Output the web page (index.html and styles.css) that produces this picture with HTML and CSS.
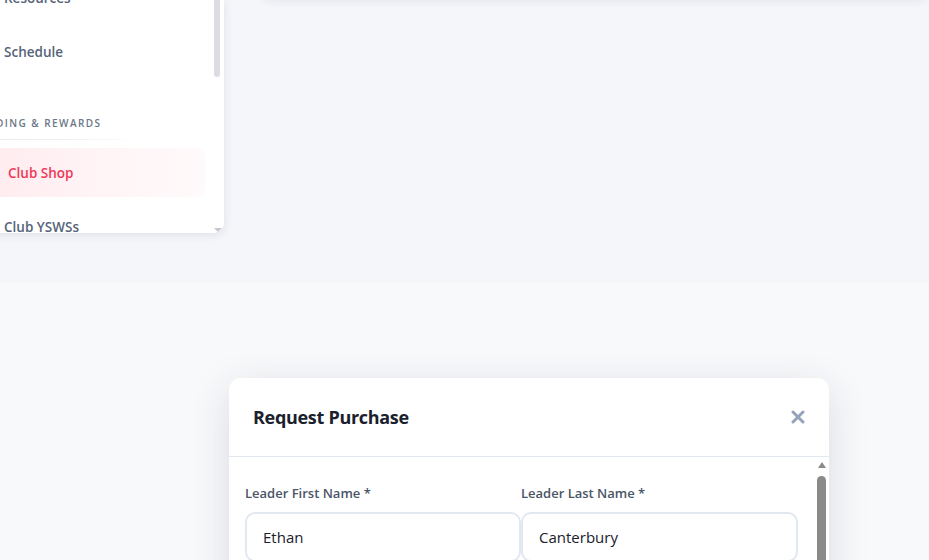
FILE: index.html
```html
<!DOCTYPE html>
<html>
<head>
<meta charset="utf-8">
<link rel="stylesheet" href="styles.css">
</head>
<body>
<div class="top">
  <aside class="sidebar">
    <nav class="nav">
      <div class="item">Resources</div>
      <div class="item">Schedule</div>
      <div class="section">
        <div class="section-title">FUNDING &amp; REWARDS</div>
      </div>
      <div class="item active">Club Shop</div>
      <div class="item">Club YSWSs</div>
    </nav>
    <div class="sb-track">
      <div class="sb-thumb"></div>
      <div class="sb-fill"></div>
      <div class="sb-arrow"></div>
    </div>
  </aside>
  <main class="main">
    <div class="card"></div>
  </main>
</div>
<div class="bottom">
  <div class="modal">
    <div class="modal-header">
      <h2 class="modal-title">Request Purchase</h2>
      <button class="close" aria-label="Close">
        <svg width="14" height="14" viewBox="0 0 14 14"><path d="M2 2 L12 12 M12 2 L2 12" stroke="#94a3b8" stroke-width="3" stroke-linecap="round"/></svg>
      </button>
    </div>
    <div class="modal-body">
      <div class="form">
        <div class="field">
          <label class="label">Leader First Name *</label>
          <div class="input">Ethan</div>
        </div>
        <div class="field">
          <label class="label">Leader Last Name *</label>
          <div class="input">Canterbury</div>
        </div>
      </div>
      <div class="scrollbar">
        <div class="arrow-up"></div>
        <div class="thumb"></div>
      </div>
    </div>
  </div>
</div>
</body>
</html>
```

FILE: styles.css
```css
* { box-sizing: border-box; }
html, body { margin: 0; padding: 0; }
body {
  font-family: "Open Sans", "Noto Sans", sans-serif;
  background: #f8f9fb;
  width: 929px;
  height: 560px;
  overflow: hidden;
}
.top {
  height: 282px;
  background: #f5f6fa;
  display: flex;
  overflow: hidden;
}
.sidebar {
  width: 284px;
  margin-left: -60px;
  height: 233px;
  background: #fff;
  border-bottom-right-radius: 10px;
  box-shadow: 0 2px 10px rgba(30, 41, 59, 0.10);
  display: flex;
  overflow: hidden;
  flex-shrink: 0;
}
.nav {
  flex: 1;
  margin-top: -27px;
  display: flex;
  flex-direction: column;
  gap: 5px;
  padding-left: 20px;
  padding-right: 10px;
}
.item {
  height: 49px;
  flex-shrink: 0;
  display: flex;
  align-items: center;
  padding-left: 44px;
  font-size: 13.5px;
  font-weight: 600;
  color: #56647a;
  border-radius: 10px;
}
.item.active {
  color: #f0385a;
  padding-left: 48px;
  background: linear-gradient(90deg, #ffe9ed 0%, #fff3f5 50%, #fffafb 100%);
}
.section {
  margin-top: 34px;
  margin-bottom: 3px;
  margin-left: -20px;
}
.section-title {
  font-size: 10px;
  font-weight: 600;
  letter-spacing: 1.45px;
  color: #6b7686;
  line-height: 16px;
  padding-left: 31px;
  padding-bottom: 8px;
  border-bottom: 1px solid transparent;
  border-image: linear-gradient(90deg, #e6e8ee 0%, #eceef2 60%, rgba(255,255,255,0) 100%) 1;
  width: 200px;
}
.sb-track {
  width: 8px;
  padding: 0 3px 0 0;
  display: flex;
  flex-direction: column;
}
.sb-thumb {
  width: 6px;
  height: 77px;
  background: #dcdde3;
  border-radius: 0 0 3px 3px;
  margin-left: -2px;
}
.sb-fill { flex: 1; }
.sb-arrow {
  width: 0; height: 0;
  margin: 0 0 1px -2px;
  border-left: 4px solid transparent;
  border-right: 4px solid transparent;
  border-top: 4px solid #c6c8cf;
}
.main {
  flex: 1;
  padding-left: 36px;
}
.card {
  height: 100px;
  margin-top: -100px;
  background: #f5f6fa;
  border-radius: 12px;
  box-shadow: 0 2px 8px rgba(30, 41, 59, 0.07);
}
.bottom {
  height: 278px;
  padding-top: 96px;
  padding-left: 229px;
}
.modal {
  width: 600px;
  height: 300px;
  background: #fff;
  border-radius: 12px;
  box-shadow: 0 10px 40px rgba(30, 41, 59, 0.14);
}
.modal-header {
  height: 79px;
  border-bottom: 1px solid #e2e8f0;
  display: flex;
  align-items: center;
  justify-content: space-between;
  padding: 0 24px;
}
.modal-title {
  margin: 0;
  font-size: 18px;
  font-weight: 700;
  color: #1a202c;
  letter-spacing: -0.3px;
}
.close {
  border: 0;
  background: none;
  padding: 0;
  width: 14px;
  height: 14px;
  display: flex;
}
.modal-body {
  display: flex;
  padding-left: 16px;
}
.form {
  display: grid;
  grid-template-columns: 276px 277px;
  align-content: start;
  padding-top: 27px;
}
.field {
  display: flex;
  flex-direction: column;
}
.label {
  font-size: 13px;
  font-weight: 600;
  color: #4a5568;
  line-height: 18px;
  margin-bottom: 10px;
}
.input {
  height: 50px;
  border: 2px solid #e2e8f0;
  border-radius: 10px;
  padding: 0 16px;
  font-size: 15px;
  color: #1a202c;
  display: flex;
  align-items: center;
}
.scrollbar {
  margin-left: 19px;
  width: 9px;
  display: flex;
  flex-direction: column;
  align-items: center;
  padding-top: 5px;
}
.arrow-up {
  width: 0; height: 0;
  border-left: 4px solid transparent;
  border-right: 4px solid transparent;
  border-bottom: 6px solid #8a8a8a;
}
.thumb {
  margin-top: 8px;
  width: 9px;
  height: 200px;
  background: #8a8a8a;
  border-radius: 5px 5px 0 0;
}
```
